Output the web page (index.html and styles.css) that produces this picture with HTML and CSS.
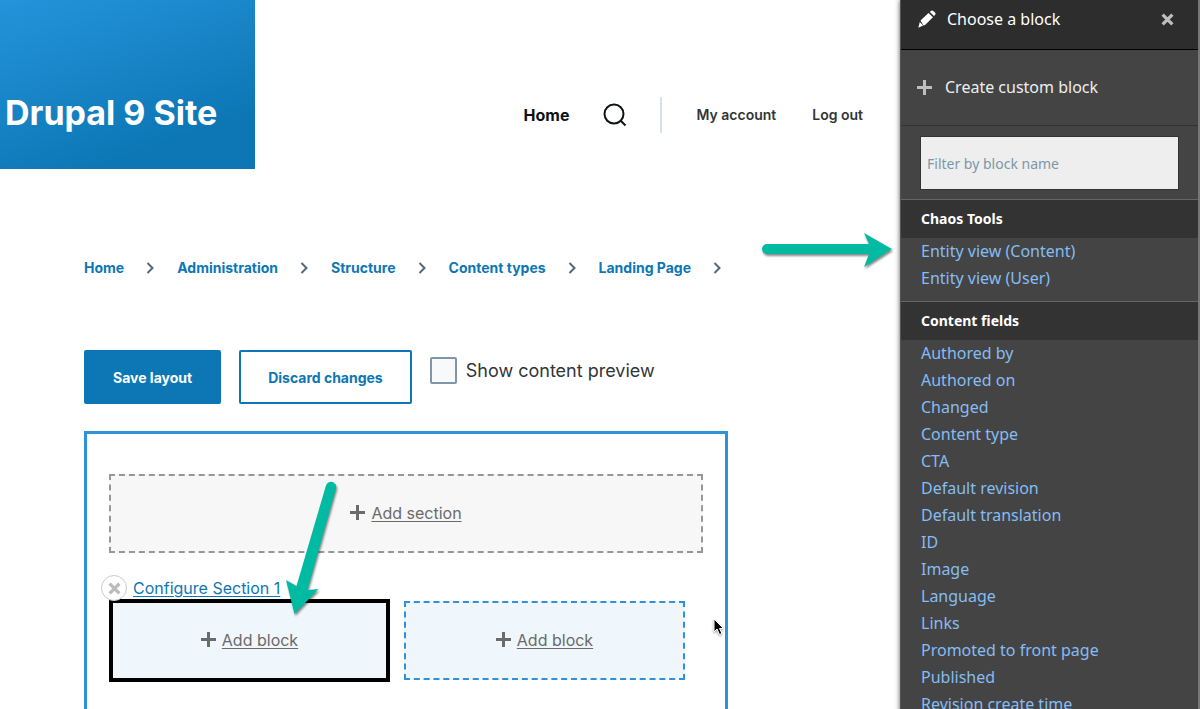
FILE: index.html
```html
<!DOCTYPE html>
<html lang="en">
<head>
<meta charset="utf-8">
<meta name="viewport" content="width=device-width, initial-scale=1">
<title>Drupal 9 Site</title>
<link rel="stylesheet" href="styles.css">
</head>
<body>
<svg class="sprite" aria-hidden="true">
  <symbol id="chevron" viewBox="0 0 8 12"><path d="M1 1l5 5-5 5" fill="none" stroke="#53697b" stroke-width="2"/></symbol>
  <symbol id="plus" viewBox="0 0 15 15"><path d="M7.500 0v15M0 7.500h15" fill="none" stroke="currentColor" stroke-width="3"/></symbol>
  <symbol id="cross" viewBox="0 0 12 12"><path d="M1.500 1.500l9 9M10.500 1.500l-9 9" fill="none" stroke="currentColor" stroke-width="3"/></symbol>
</svg>
<div class="page">
  <div class="site">
    <header class="header">
      <div class="brand"><a href="#">Drupal 9 Site</a></div>
      <nav class="nav" aria-label="Main">
        <a class="nav-home" href="#">Home</a>
        <button class="search" type="button" aria-label="Search">
          <svg width="24" height="24" viewBox="0 0 24 24"><circle cx="11" cy="11" r="9.500" fill="none" stroke="#0d1214" stroke-width="2"/><path d="M17.500 17.500l5 5" stroke="#0d1214" stroke-width="2"/></svg>
        </button>
        <div class="account">
          <a href="#">My account</a>
          <a href="#">Log out</a>
        </div>
      </nav>
    </header>
    <main class="main">
      <nav class="breadcrumb" aria-label="Breadcrumb">
        <a href="#">Home</a><svg><use href="#chevron"/></svg>
        <a href="#">Administration</a><svg><use href="#chevron"/></svg>
        <a href="#">Structure</a><svg><use href="#chevron"/></svg>
        <a href="#">Content types</a><svg><use href="#chevron"/></svg>
        <a href="#">Landing Page</a><svg><use href="#chevron"/></svg>
      </nav>
      <form class="actions">
        <button class="button primary" type="button">Save layout</button>
        <button class="button" type="button">Discard changes</button>
        <label class="preview"><input type="checkbox">Show content preview</label>
      </form>
      <section class="builder">
        <div class="add add-section"><svg><use href="#plus"/></svg><a href="#">Add section</a></div>
        <div class="section-bar">
          <button class="remove" type="button" aria-label="Remove section"><svg><use href="#cross"/></svg></button>
          <a href="#">Configure Section 1</a>
        </div>
        <div class="columns">
          <div class="add add-block selected"><svg><use href="#plus"/></svg><a href="#">Add block</a></div>
          <div class="add add-block"><svg><use href="#plus"/></svg><a href="#">Add block</a></div>
        </div>
      </section>
    </main>
    <svg class="arrow arrow-right" viewBox="0 0 132 36"><path d="M6 11H108L103 0L131 16L103 34L108 21H6A5 5 0 0 1 6 11Z" fill="#00bba1"/></svg>
    <svg class="arrow arrow-down" viewBox="0 0 64 136"><path d="M51 5.500A5.200 5.200 0 0 1 61 8.500L32.500 110L43.500 109L19.500 134L11 100L21.500 106Z" fill="#00bba1"/></svg>
    <svg class="cursor" viewBox="0 0 12 18"><path d="M1 1v13l3-3 2.500 5.500 2.500-1-2.500-5H10.500Z" fill="#000" stroke="#fff"/></svg>
  </div>
  <aside class="tray">
    <header class="tray-head">
      <svg class="pencil" viewBox="0 0 18 18"><path d="M2.500 10.500L10.500 3L15 7.200L7 15L5.500 15.500Z M11.800 2L13.200.7Q14.300 0 15.300 1L17.200 2.800Q18 3.800 17.200 4.700L16 6Z M1.800 12L5.200 15.500L.3 17.700Z" fill="#fff"/></svg>
      <h1>Choose a block</h1>
      <button class="close" type="button" aria-label="Close"><svg><use href="#cross"/></svg></button>
    </header>
    <div class="create"><svg><use href="#plus"/></svg><a href="#">Create custom block</a></div>
    <div class="filter"><input type="search" placeholder="Filter by block name" aria-label="Filter by block name"></div>
    <section class="group">
      <h2>Chaos Tools</h2>
      <ul>
        <li><a href="#">Entity view (Content)</a></li>
        <li><a href="#">Entity view (User)</a></li>
      </ul>
    </section>
    <section class="group">
      <h2>Content fields</h2>
      <ul>
        <li><a href="#">Authored by</a></li>
        <li><a href="#">Authored on</a></li>
        <li><a href="#">Changed</a></li>
        <li><a href="#">Content type</a></li>
        <li><a href="#">CTA</a></li>
        <li><a href="#">Default revision</a></li>
        <li><a href="#">Default translation</a></li>
        <li><a href="#">ID</a></li>
        <li><a href="#">Image</a></li>
        <li><a href="#">Language</a></li>
        <li><a href="#">Links</a></li>
        <li><a href="#">Promoted to front page</a></li>
        <li><a href="#">Published</a></li>
        <li><a href="#">Revision create time</a></li>
      </ul>
    </section>
  </aside>
</div>
</body>
</html>
```
FILE: styles.css
```css
* { box-sizing: border-box; }
body { margin: 0; background: #fff; color: #313637; font-family: Inter, "Open Sans", sans-serif; }
button { margin: 0; padding: 0; border: 0; background: none; font: inherit; cursor: pointer; }
.sprite { position: absolute; width: 0; height: 0; }

.page { display: grid; grid-template-columns: minmax(0, 1fr) 300px; height: 100vh; overflow: hidden; }
.site { position: relative; }

.header { display: flex; justify-content: space-between; align-items: stretch; }
.brand { width: 255px; padding: 93px 0 36px 5px; background: linear-gradient(160deg, #2494db 0%, #0d77b5 78%); line-height: 40px; }
.brand a { display: block; color: #fff; font-size: 34px; font-weight: 700; text-decoration: none; white-space: nowrap; }
.nav { display: flex; align-items: center; padding: 60px 37px 0 0; }
.nav a { color: #313637; font-size: 14px; font-weight: 600; text-decoration: none; white-space: nowrap; }
.nav .nav-home { color: #0d1214; font-size: 16px; font-weight: 700; }
.search { display: flex; margin: 0 33px 0 34px; }
.account { display: flex; align-items: center; gap: 36px; height: 36px; padding-left: 34px; border-left: 2px solid #d7e1e8; }

.main { padding: 88px 172px 0 84px; }
.breadcrumb { display: flex; align-items: center; gap: 22px; line-height: 22px; }
.breadcrumb a { color: #0d77b5; font-size: 14px; font-weight: 700; text-decoration: none; white-space: nowrap; }
.breadcrumb svg { width: 9px; height: 12px; flex: none; }

.actions { display: flex; align-items: flex-start; gap: 18px; margin-top: 71px; }
.button { height: 54px; padding: 0 27px; border: 2px solid #0d77b5; border-radius: 2px; color: #0d77b5; font-size: 14px; font-weight: 700; white-space: nowrap; }
.button.primary { background: #0d77b5; color: #fff; }
.preview { display: flex; align-items: center; gap: 9px; margin-top: 7px; font-size: 18px; white-space: nowrap; }
.preview input { width: 27px; height: 27px; margin: 0; appearance: none; border: 2px solid #7e96a7; border-radius: 2px; background: #f7f9fa; }

.builder { height: 480px; margin-top: 27px; padding: 40px 22px 0; border: 3px solid #2f91da; }
.add { display: flex; align-items: center; justify-content: center; gap: 6px; padding-bottom: 2px; color: #6b6b6b; font-size: 16px; }
.add svg { width: 15px; height: 15px; }
.add a { color: inherit; text-underline-offset: 2px; }
.add-section { height: 79px; border: 2px dashed #979797; background: #f7f7f7; }
.section-bar { position: relative; display: flex; align-items: center; gap: 6px; height: 26px; margin: 22px 0 0 -8px; }
.section-bar a { color: #0d77b5; font-size: 16px; text-underline-offset: 2px; }
.remove { position: relative; z-index: 1; display: flex; align-items: center; justify-content: center; width: 26px; height: 26px; border: 1px solid #ccc; border-radius: 50%; background: #fff; color: #bbb; }
.remove svg { width: 13px; height: 13px; }
.columns { display: grid; grid-template-columns: 1fr 1fr; align-items: center; gap: 14px; margin-top: -2px; padding-right: 18px; }
.add-block { height: 79px; border: 2px dashed #2f91da; background: #eff6fc; }
.selected { height: 83px; border: 4px solid #000; }

.arrow { position: absolute; overflow: visible; filter: drop-shadow(1px 2px 1px #0007); }
.arrow-right { top: 233px; left: 761px; width: 132px; height: 36px; }
.arrow-down { top: 480px; left: 275px; width: 64px; height: 136px; }
.cursor { position: absolute; top: 618px; left: 713px; width: 12px; height: 18px; filter: drop-shadow(0 1px 1px #0006); }

.tray { position: relative; overflow: hidden; border-right: 2px solid #777; border-left: 1px solid #555; background: #444; box-shadow: 0 0 5px #000a; color: #fff; font-family: "Noto Sans", "Open Sans", sans-serif; }
.tray-head { display: flex; align-items: center; height: 50px; padding: 0 24px 11px 17px; border-bottom: 1px solid #000; background: #2d2d2d; }
.tray-head h1 { flex: 1; margin: 0 0 0 11px; font-size: 16px; font-weight: 400; }
.pencil { width: 18px; height: 18px; }
.close { display: flex; color: #bebebe; }
.close svg { width: 13px; height: 13px; }
.create { display: flex; align-items: center; gap: 13px; height: 76px; padding: 0 0 1px 16px; border-bottom: 1px solid #333; color: #bebebe; }
.create svg { width: 15px; height: 15px; }
.create a { color: #eee; font-size: 16px; text-decoration: none; }
.filter { padding: 11px 20px 10px; }
.filter input { display: block; width: 100%; height: 52px; padding: 0 6px; appearance: none; border: 0; border-radius: 0; outline: 1px solid #333; background: #eee; font-family: inherit; font-size: 14px; }
.filter input::placeholder { color: #7e96a7; opacity: 1; }
.group h2 { margin: 0; padding-left: 20px; border-top: 1px solid #666; background: #333; font-size: 14px; font-weight: 700; line-height: 38px; }
.group ul { margin: 0; padding: 0 0 9px 20px; list-style: none; }
.group li { line-height: 27px; }
.group a { color: #85bcf3; font-size: 16px; text-decoration: none; }
```
